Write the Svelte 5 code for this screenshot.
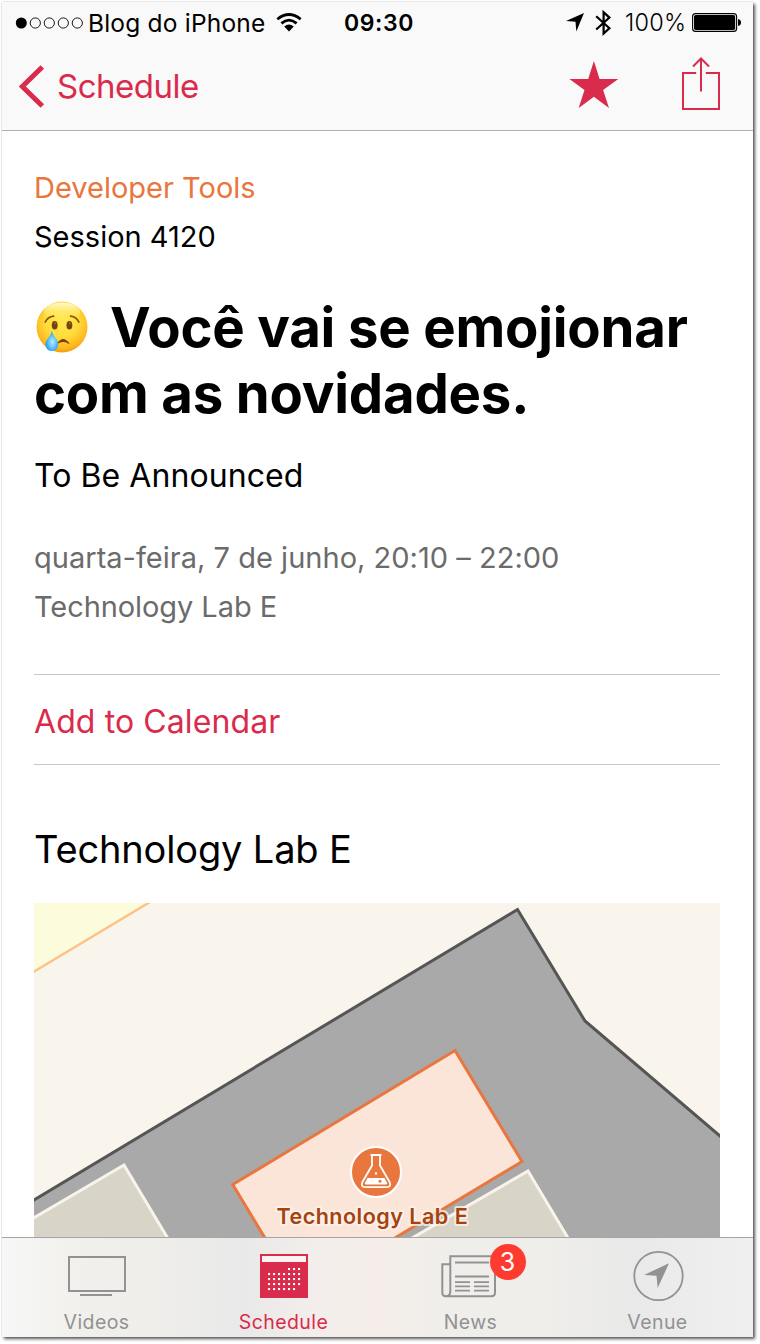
<script>
  const dots = [0, 1, 2, 3, 4];
  const calendar = [
    [4, 5, 6],
    [0, 1, 2, 3, 4, 5, 6],
    [0, 1, 2, 3, 4, 5, 6],
    [0, 1, 2, 3, 4, 5, 6],
    [0, 1, 2, 3, 4, 5]
  ];
</script>

<div class="page">
<div class="phone">
  <header>
    <div class="status">
      <svg class="signal" width="69" height="14" viewBox="0 0 69 14">
        {#each dots as d}
          <circle cx={6.3 + d * 14} cy="7" r={d === 0 ? 5.5 : 5.1} fill={d === 0 ? '#000' : 'none'} stroke={d === 0 ? 'none' : '#000'} stroke-width="0.9" />
        {/each}
      </svg>
      <span class="carrier">Blog do iPhone</span>
      <svg class="wifi" width="26" height="20" viewBox="0 0 26 20">
        <g fill="none" stroke="#000" stroke-width="2.7">
          <path d="M1.3 6.2Q13 -3.2 24.7 6.2" />
          <path d="M5.4 10.4Q13 4 20.6 10.4" />
        </g>
        <path d="M8.2 13.6Q13 9.2 17.8 13.6L13 18.5Z" />
      </svg>
      <span class="time">09:30</span>
      <svg class="loc" width="18" height="19" viewBox="0 0 18 19"><path d="M18 0 10.3 18.5 9.5 8.7 0 8Z" /></svg>
      <svg class="bt" width="17" height="28" viewBox="0 0 17 28"><path d="M1.2 7.2 14.4 19.3 8.6 24.6V3.2L14.4 8.6 1.2 20.5" fill="none" stroke="#000" stroke-width="2.2" /></svg>
      <span class="pct">100%</span>
      <svg class="battery" width="50" height="20" viewBox="0 0 50 20">
        <rect x=".6" y=".6" width="44" height="17.8" rx="3" fill="none" stroke="#000" stroke-width="1.1" />
        <rect x="2" y="2" width="41.2" height="15" rx="1.8" />
        <path d="M46 6Q49 6.5 49 9.5T46 13Z" />
      </svg>
    </div>
    <nav>
      <svg class="back" width="26" height="43" viewBox="0 0 26 43"><path d="M23.3 2 3.3 21.5 23.3 41" fill="none" stroke="#d92b4b" stroke-width="5" /></svg>
      <span class="backlabel">Schedule</span>
      <svg class="star" width="50" height="48" viewBox="0 0 50 48"><path d="M24.9 0 30.6 18 49.3 18 34.1 28.9 40 47 24.9 35.8 9.7 47 15.5 28.9 .4 18 19.2 18Z" fill="#d92b4b" /></svg>
      <svg class="share" width="38" height="54" viewBox="0 0 38 54"><path d="M14.2 16H1V52H37V16H23.8M19 34.5V2M11 9.5 19 1.5 27 9.5" fill="none" stroke="#d92b4b" stroke-width="2" /></svg>
    </nav>
  </header>

  <main>
    <div class="line track">Developer Tools</div>
    <div class="line session">Session 4120</div>
    <h1>
      <svg class="emoji" width="54" height="54" viewBox="0 0 54 54">
        <defs>
          <radialGradient id="face" cx=".5" cy=".38" r=".64">
            <stop offset="0" stop-color="#ffe94d" /><stop offset=".5" stop-color="#ffdc3b" /><stop offset=".85" stop-color="#fdb61d" /><stop offset="1" stop-color="#f29510" />
          </radialGradient>
          <linearGradient id="shine" x1="0" y1="0" x2="0" y2="1"><stop offset="0" stop-color="#fffbd0" /><stop offset="1" stop-color="#ffe94d" stop-opacity="0" /></linearGradient>
          <radialGradient id="tear" cx=".55" cy=".55" r=".6"><stop offset="0" stop-color="#b9eeff" /><stop offset=".45" stop-color="#69c9fa" /><stop offset="1" stop-color="#1c8be2" /></radialGradient>
        </defs>
        <circle cx="27" cy="27" r="25.5" fill="url(#face)" />
        <ellipse cx="27" cy="12" rx="18" ry="9.5" fill="url(#shine)" />
        <ellipse cx="19.7" cy="25.3" rx="2.9" ry="4.3" fill="#77420e" />
        <ellipse cx="34.4" cy="25.3" rx="2.9" ry="4.3" fill="#77420e" />
        <circle cx="20" cy="23.3" r=".9" fill="#ae7340" /><circle cx="34.7" cy="23.3" r=".9" fill="#ae7340" />
        <g fill="none" stroke="#8d500c" stroke-width="1.7" stroke-linecap="round">
          <path d="M10.3 22Q12.6 16.8 18.6 16.1" /><path d="M35.6 16.1Q41.6 16.8 43.8 22" />
        </g>
        <path d="M22.3 43.4Q28.2 35.5 34 43.4Q28.2 39.5 22.3 43.4Z" fill="#7a3c0b" stroke="#7a3c0b" />
        <path d="M16.8 31C18.4 37 23.2 39.3 23.2 44.6A6.4 6.4 0 0 1 10.4 44.6C10.4 39.3 15.6 37 16.8 31Z" fill="url(#tear)" />
      </svg><span>Você vai se emojionar</span><br /><span>com as novidades.</span>
    </h1>
    <div class="speaker">To Be Announced</div>
    <div class="line when">quarta-feira, 7 de junho, 20:10 – 22:00</div>
    <div class="line where">Technology Lab E</div>
    <div class="add"><span>Add to Calendar</span></div>
    <h2>Technology Lab E</h2>
    <svg class="map" width="686" height="334" viewBox="34 903 686 334">
      <rect x="34" y="903" width="686" height="334" fill="#f9f5ec" />
      <path d="M30 899V974L155 899Z" fill="#fcfbdc" stroke="#fac284" stroke-width="2.4" />
      <path d="M30 1202.5 517.5 909.5 585 1021 724 1139.5V1250H30Z" fill="#a9a9a9" stroke="#555" stroke-width="3" />
      <path d="M30 1220 124 1165 176 1252H30Z" fill="#d8d4c8" stroke="#f8f4ec" stroke-width="3" />
      <path d="M400 1245 528 1171 574 1248Z" fill="#d8d4c8" stroke="#f8f4ec" stroke-width="3" />
      <path d="M232.7 1184.5 455 1050.5 522 1161.5 370 1253H274Z" fill="#fbe4d8" stroke="#e8763d" stroke-width="3" />
      <circle cx="376" cy="1172" r="25" fill="#e8763d" stroke="#fff" stroke-width="2" />
      <g fill="none" stroke="#fff" stroke-width="1.8" stroke-linejoin="round">
        <path d="M370.5 1155H381.5M372 1155.5V1165.5L362.4 1182Q360.5 1187.2 365 1187.2H387Q391.5 1187.2 389.6 1182L380 1165.5V1155.5" />
      </g>
      <path d="M367.5 1178H384.5L387.4 1183.5Q387 1184.5 386 1184.5H366Q365 1184.5 364.6 1183.5Z" fill="#fff" />
      <circle cx="380" cy="1181.2" r="1.5" fill="#e8763d" /><circle cx="376" cy="1173.4" r="1.2" fill="#fff" />
      <text class="maplabel" x="372.3" y="1224" text-anchor="middle">Technology Lab E</text>
    </svg>
  </main>

  <footer>
    <div class="tab">
      <svg width="60" height="56" viewBox="0 0 60 56"><path d="M2 16H58V50H2ZM13 54H45" fill="none" stroke="#929292" stroke-width="2" /></svg>
      <span>Videos</span>
    </div>
    <div class="tab active">
      <svg width="48" height="56" viewBox="0 0 48 56">
        <path d="M0 13H48V57H0Z" fill="#d92b4b" /><path d="M2 15H46V21H2Z" fill="#fbf3f1" />
        {#each calendar as row, r}
          {#each row as c}
            <rect x={8 + c * 5} y={27 + r * 5} width="2.1" height="2.1" fill="#fff" />
          {/each}
        {/each}
      </svg>
      <span>Schedule</span>
    </div>
    <div class="tab">
      <div class="newsicon">
        <svg width="60" height="56" viewBox="0 0 60 56">
          <g fill="none" stroke="#929292" stroke-width="2">
            <path d="M9.3 50.5V15.3H54V51.5Q54 55.3 50.2 55.3H5Q1.3 55.3 1.3 51.5V23.3H9.3M9.3 50.5Q9.3 55.3 5 55.3" />
            <path d="M14 21.5H48M14 35.5H48M14 41.2H29M33 41.2H48M14 45.4H29M33 45.4H48M14 49.6H29M33 49.6H48" stroke-width="1.8" />
          </g>
        </svg>
        <b class="badge">3</b>
      </div>
      <span>News</span>
    </div>
    <div class="tab">
      <svg width="52" height="56" viewBox="0 0 52 56"><circle cx="26.5" cy="35" r="24.2" fill="none" stroke="#929292" stroke-width="1.8" /><path d="M37 22.2 25.7 47 24.5 34.8 12 34Z" fill="#929292" /></svg>
      <span>Venue</span>
    </div>
  </footer>
</div>
</div>

<style>
  :global(body) { margin: 0; background: #fff; }
  .page { box-sizing: border-box; width: 760px; height: 1344px; padding: 2px 0 0 2px; overflow: hidden; background: #fff; }
  .phone {
    box-sizing: border-box; width: 751px; height: 1335px;
    display: flex; flex-direction: column; background: #fff; color: #000;
    font-family: Inter, "Liberation Sans", sans-serif; white-space: nowrap;
    box-shadow: 0 0 1px rgba(0,0,0,.35), 2px 2px 3px rgba(0,0,0,.65);
  }
  svg { display: block; flex: none; }
  header { flex: none; box-sizing: border-box; height: 129px; background: #f9f9f9; border-bottom: 1px solid #b2b2b2; }
  .status { display: flex; align-items: center; height: 41px; padding-left: 13px; }
  .carrier { width: 189px; margin-left: 4px; font-size: 24.5px; letter-spacing: .2px; }
  .signal { margin-top: 1px; }
  .wifi { margin-left: -1px; }
  .time { width: 222px; margin-left: 42px; font-size: 23px; font-weight: 600; letter-spacing: .6px; }
  .bt { margin-left: 11px; }
  .pct { width: 66px; margin-left: 13px; font-size: 23.5px; font-weight: 300; letter-spacing: .2px; }
  .battery { margin-left: 1px; }
  nav { display: flex; height: 87px; padding-left: 17px; align-items: flex-start; }
  .back { margin-top: 22px; }
  .backlabel { width: 512px; margin-left: 12px; line-height: 86px; font-size: 33px; color: #d92b4b; letter-spacing: -.5px; }
  .star { margin-top: 17.5px; }
  .share { margin: 14px 0 0 63px; }
  main { flex: 1; min-height: 0; overflow: hidden; padding: 32px 33px 0 32px; }
  .line { height: 49px; line-height: 49px; font-size: 29px; }
  .track { color: #e8763d; }
  .where { letter-spacing: -.08px; }
  h1 { margin: 33px 0 0; height: 132px; line-height: 66px; font-size: 54.5px; font-weight: 700; letter-spacing: -.2px; }
  .emoji { display: inline-block; margin: 0 21px 0 1px; vertical-align: -7px; }
  .speaker { margin-top: 26px; height: 47px; line-height: 48px; font-size: 32px; letter-spacing: .07px; }
  .when { margin-top: 34px; letter-spacing: .02px; }
  .when, .where { color: #6b6b6b; }
  .add { display: flex; align-items: center; box-sizing: border-box; height: 91px; margin-top: 43px; padding-top: 3px; border-top: 1px solid #c8c7cc; border-bottom: 1px solid #c8c7cc; font-size: 32px; letter-spacing: .1px; color: #d92b4b; }
  h2 { margin: 55px 0 0; height: 83px; line-height: 59px; font-size: 38px; font-weight: 400; letter-spacing: -.15px; }
  .maplabel { font-size: 21.5px; font-weight: 600; letter-spacing: .5px; fill: #a5430f; stroke: rgba(255,245,238,.75); stroke-width: 4px; paint-order: stroke; stroke-linejoin: round; }
  footer {
    flex: none; box-sizing: border-box; height: 100px; display: flex; justify-content: space-between; padding: 0 2px 0 1px; border-top: 1px solid #a5a5a5;
    background: linear-gradient(90deg, #f7f7f7 0, #f1f0ec 10%, #efeeeb 20%, #e9e9e9 32%, #f3eeeb 42%, #f5eeea 50%, #efeeeb 61%, #efeeeb 72%, #e9e9e9 84%, #f0f0f0 100%);
  }
  .tab { width: 187px; display: flex; flex-direction: column; align-items: center; color: #929292; font-size: 19.5px; }
  .tab svg { margin-top: 3px; overflow: visible; }
  .tab span { margin-top: 12px; line-height: 26px; letter-spacing: .4px; }
  .active { color: #d92b4b; }
  .newsicon { position: relative; }
  .badge { position: absolute; left: 49px; top: 6px; width: 36px; height: 36px; border-radius: 50%; background: #ff3b30; color: #fff; text-align: center; font-size: 25px; line-height: 36px; font-weight: 400; }
</style>
